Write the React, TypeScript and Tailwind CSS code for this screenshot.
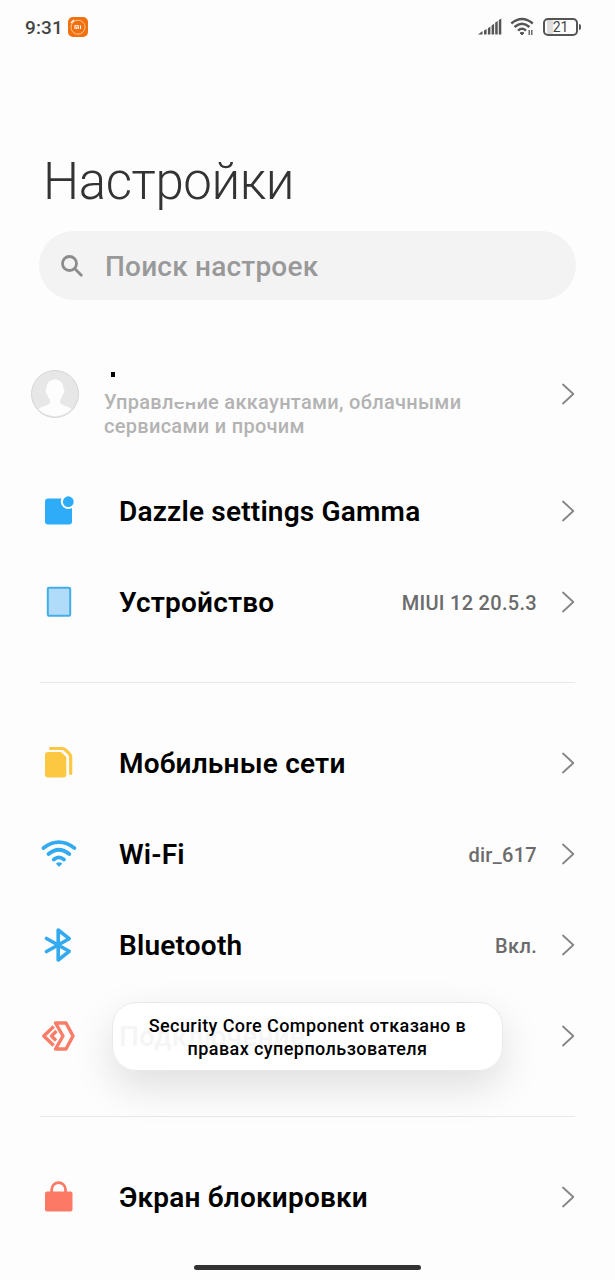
import type { ReactNode } from 'react';

const Chevron = () => (
  <svg className="ml-6 h-[22px] w-[14px] shrink-0" viewBox="0 0 14 22" fill="none" stroke="#858585" strokeWidth="1.8" strokeLinecap="round" strokeLinejoin="round">
    <path d="M2 1.5 12.3 11 2 20.5" />
  </svg>
);

const DazzleIcon = () => (
  <svg width="36" height="36" viewBox="0 0 36 36">
    <rect x="4" y="5.5" width="27" height="26" rx="3" fill="#2facf8" />
    <circle cx="27.3" cy="8.5" r="7.5" fill="#fdfdfd" />
    <circle cx="27.3" cy="8.7" r="5.4" fill="#2facf8" />
  </svg>
);

const DeviceIcon = () => (
  <svg width="36" height="36" viewBox="0 0 36 36">
    <rect x="6.8" y="3.8" width="22.4" height="28" rx="1.2" fill="#b0dcfa" stroke="#43aee6" strokeWidth="2" />
  </svg>
);

const SimIcon = () => (
  <svg width="36" height="36" viewBox="0 0 36 36">
    <path d="M7 7h13l5.300 5V29.500a3 3 0 0 1-3 3H7a3 3 0 0 1-3-3V10a3 3 0 0 1 3-3Z" fill="#fcc842" />
    <path d="M9.500 3.500H21Q23 3.500 24.500 5L28 8.300Q29.700 10 29.700 12.500V28.500" fill="none" stroke="#fcc842" strokeWidth="3.2" strokeLinecap="round" />
  </svg>
);

const WifiIcon = () => (
  <svg width="36" height="36" viewBox="0 0 36 36" fill="none" stroke="#33aaf0" strokeWidth="3.8" strokeLinecap="round">
    <path d="M2.500 12Q17.800 .3 33.300 12" />
    <path d="M7.500 18Q17.800 9.400 28.300 18" />
    <path d="M12.800 23.500Q17.800 19.300 23 23.500" />
    <path d="M16 27.600Q18 26.400 20.200 27.600L18 29.800Z" fill="#33aaf0" strokeWidth="1.6" strokeLinejoin="round" />
  </svg>
);

const BluetoothIcon = () => (
  <svg width="36" height="36" viewBox="0 0 36 36" fill="none" stroke="#33aaf0" strokeWidth="3.6" strokeLinecap="round" strokeLinejoin="round">
    <path d="M5.500 11.500 28.200 24.300 17.200 33V3L28.200 11.700 5.500 24.500" />
  </svg>
);

const ShareIcon = () => (
  <svg width="36" height="36" viewBox="0 0 36 36" fill="none" stroke="#f87d68" strokeWidth="3.4" strokeLinejoin="round">
    <path d="M14.500 5H25L32 18 25 31H14.500L22 18Z" />
    <path d="M12.700 8.500 2.800 18 12.700 27.500" />
    <path d="M15.500 13 10.500 18 15 22.500" />
  </svg>
);

const LockIcon = () => (
  <svg width="36" height="36" viewBox="0 0 36 36">
    <path d="M10.700 15V10.500a6.900 6.900 0 0 1 13.800 0V15" fill="none" stroke="#fc7a65" strokeWidth="2.8" />
    <rect x="4" y="12.500" width="27.500" height="20" rx="2" fill="#fc7a65" />
  </svg>
);

interface RowProps {
  icon: ReactNode;
  label: string;
  value?: string;
}

const Row = ({ icon, label, value }: RowProps) => (
  <li className="flex h-[91px] items-center pr-10 pl-[41px]">
    <span className="w-[78px] shrink-0">{icon}</span>
    <span className="flex-1 pt-[2px] text-[28px] font-semibold tracking-[0.2px] whitespace-nowrap text-black">{label}</span>
    {value && <span className="pt-[2px] text-[20px] font-medium tracking-[0.3px] text-[#6b6b6b]">{value}</span>}
    <Chevron />
  </li>
);

const Divider = () => (
  <li className="flex h-[70px] items-center px-10">
    <div className="h-px w-full bg-[#e8e8e8]" />
  </li>
);

const StatusBar = () => (
  <header className="flex h-[54px] items-center pr-[34px] pl-[25px]">
    <span className="pt-[2px] text-[19px] font-medium tracking-[0.1px] text-[#444]">9:31</span>
    <svg className="ml-[5px]" width="20" height="20" viewBox="0 0 20 20">
      <rect width="20" height="20" rx="5" fill="#f1700f" />
      <circle cx="10" cy="10.200" r="7" fill="none" stroke="#ffc58c" strokeWidth="1" />
      <path d="m3 6 3-3" stroke="#fff" strokeWidth="1.5" />
      <path d="M7 12V8.800h3.300V12M8.700 10V12M12.500 8.500V12" fill="none" stroke="#fff" strokeWidth="1.1" />
    </svg>
    <div className="ml-auto flex items-center">
      {/* signal strength */}
      <svg width="24" height="20" viewBox="0 0 24 20" fill="#555">
        <path d="m0 17.500 4.500-3.500v3.500zM6 13.500l2.600-1.600v5.600H6zM9.900 11.200l2.500-1.600v7.900H9.900zM13.600 8.500l2.500-1.700v10.700h-2.500zM17.200 5.500l2.500-1.600v13.600h-2.500zM20.800 3l2.500-1.500v16h-2.500z" />
      </svg>
      <svg className="ml-[8px]" width="28" height="20" viewBox="0 0 28 20" fill="none" stroke="#555" strokeWidth="2.4">
        <path d="M1.300 6.500Q12-2.500 22.800 6.500M4.500 10Q12 3.500 19.500 10M8 13.700Q12 10 16 13.700" />
        <path d="M10 16q2-1.500 4 0l-2 2z" fill="#555" strokeWidth="1" />
        <path d="M19.200 13v5M21.800 13v5" strokeWidth="1.3" />
      </svg>
      <div className="ml-[5px] flex h-[18px] w-[35px] items-center justify-center rounded-[5px] border-2 border-[#555] bg-[linear-gradient(90deg,transparent_2px,#ddd_2px,#ddd_8px,transparent_8px)] text-[14px] leading-none text-[#444]">
        21
      </div>
      <div className="ml-px h-[6px] w-[2px] rounded-r bg-[#555]" />
    </div>
  </header>
);

const Toast = () => (
  <div className="absolute top-[1002px] left-[112px] flex h-[69px] w-[391px] items-center justify-center rounded-[24px] border border-[#e9e9e9] bg-white/96 text-center text-[18px] leading-[23px] font-medium tracking-[0.42px] text-black shadow-[0_16px_42px_rgba(0,0,0,0.12)]">
    <p>
      Security Core Component отказано в
      <br />
      правах суперпользователя
    </p>
  </div>
);

const App = () => {
  return (
    <div className="relative h-[1280px] w-[615px] overflow-hidden bg-[#fdfdfd] font-['Roboto',sans-serif]">
      <StatusBar />

      <h1 className="mt-[96px] pl-[43px] text-[51px] leading-[64px] font-light tracking-[-0.4px] text-[#333]">Настройки</h1>

      {/* Search */}
      <div className="mx-[39px] mt-[17px] flex h-[69px] items-center rounded-full bg-[#f3f3f3] pl-[21px]">
        <svg width="24" height="24" viewBox="0 0 24 24" fill="none" stroke="#8c8c8c" strokeWidth="2.8" strokeLinecap="round">
          <circle cx="9.500" cy="9.500" r="7" />
          <path d="m14.800 14.800 6.500 6.500" />
        </svg>
        <span className="ml-[21px] pt-[2px] text-[28px] font-medium tracking-[0.2px] text-[#999]">Поиск настроек</span>
      </div>

      {/* Account */}
      <div className="mt-[46px] flex h-[96px] items-center pr-10 pl-[31px]">
        <svg className="shrink-0" width="48" height="48" viewBox="0 0 48 48">
          <circle cx="24" cy="24" r="23.500" fill="#e7e7e7" stroke="#d6d6d6" />
          <path d="M24 9.500c5.500 0 8.700 3.800 8.500 9.500 1.500 0 1 5-.8 5.500-.4 2.500-1.500 4-2.700 5.200v3c1.500 3 8.500 3.300 11.500 6.500A23 23 0 0 1 7.500 39.200c3-3.200 10-3.500 11.500-6.500v-3c-1.200-1.200-2.300-2.700-2.700-5.200-1.800-.5-2.300-5.500-.8-5.500-.2-5.700 3-9.500 8.500-9.500Z" fill="#fdfdfd" />
        </svg>
        <div className="relative ml-[25px] flex-1 pt-[21px]">
          <div className="mb-[13px] ml-[7px] h-[5px] w-1 bg-black" />
          <p className="text-[20px] leading-6 font-medium tracking-[0.29px] text-[#b3b3b3]">
            Управление аккаунтами, облачными
            <br />
            сервисами и прочим
          </p>
          {/* hidden account name */}
          <div className="absolute top-[38px] left-[69px] h-[13px] w-[29px] bg-[#fdfdfd]" />
        </div>
        <Chevron />
      </div>

      <ul className="mt-[23px]">
        <Row icon={<DazzleIcon />} label="Dazzle settings Gamma" />
        <Row icon={<DeviceIcon />} label="Устройство" value="MIUI 12 20.5.3" />
        <Divider />
        <Row icon={<SimIcon />} label="Мобильные сети" />
        <Row icon={<WifiIcon />} label="Wi-Fi" value="dir_617" />
        <Row icon={<BluetoothIcon />} label="Bluetooth" value="Вкл." />
        <Row icon={<ShareIcon />} label="Подключение" />
        <Divider />
        <Row icon={<LockIcon />} label="Экран блокировки" />
      </ul>

      <Toast />
      {/* Home gesture bar */}
      <div className="absolute bottom-[10px] left-[194px] h-[5px] w-[227px] rounded-full bg-[#333]" />
    </div>
  );
};

export default App;
